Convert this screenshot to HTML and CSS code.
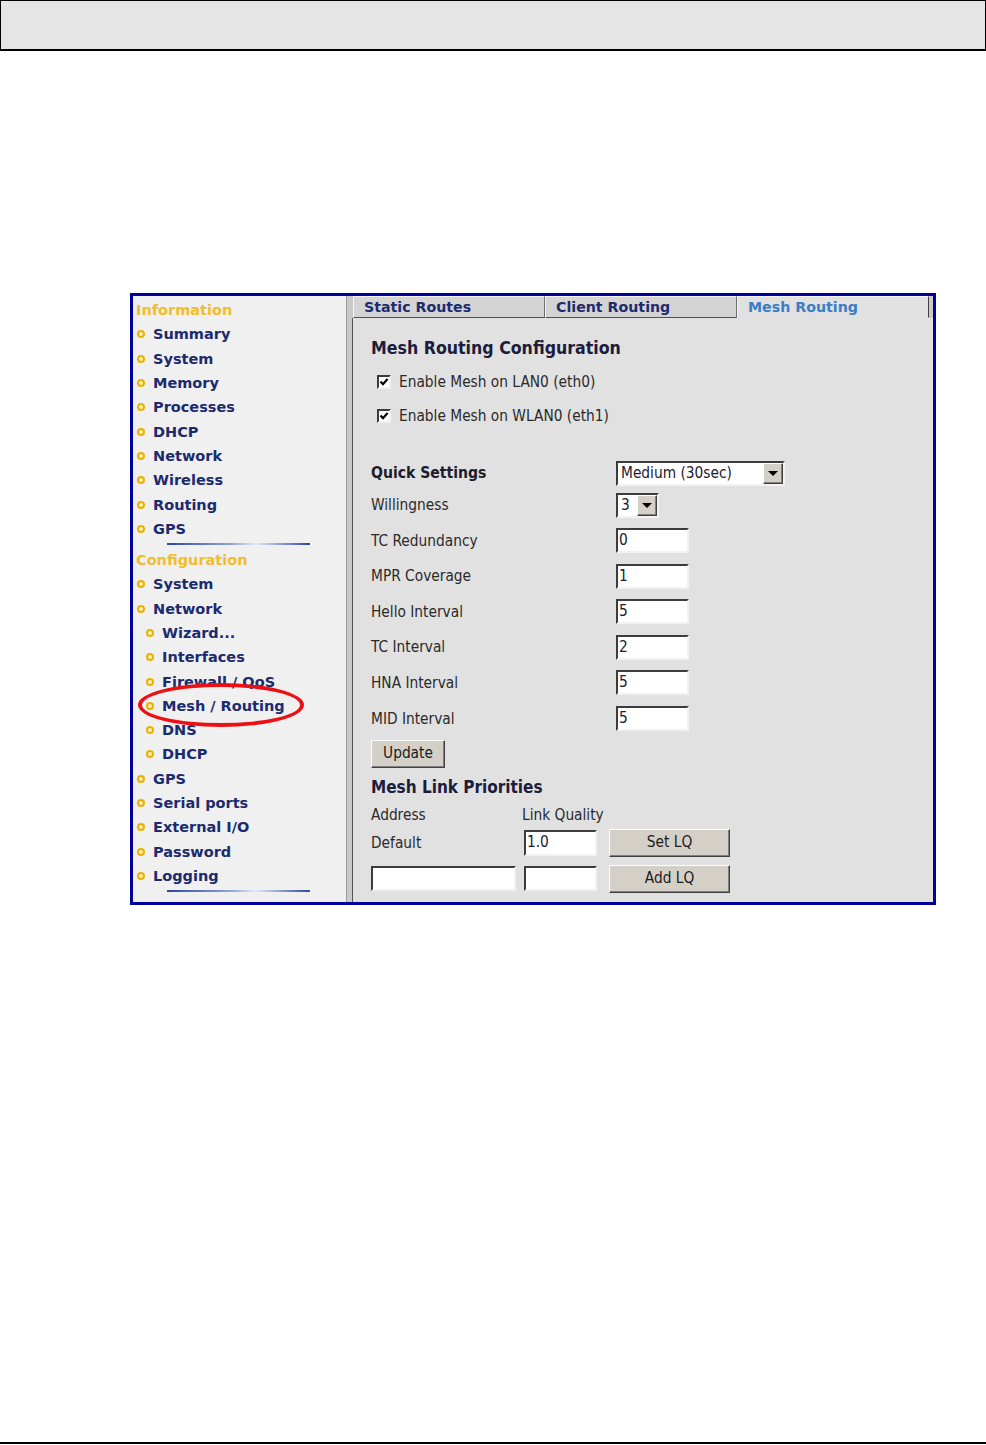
FILE: index.html
```html
<!DOCTYPE html>
<html lang="en">
<head>
  <meta charset="UTF-8">
  <meta name="viewport" content="width=device-width, initial-scale=1.0">
  <title>Mesh Routing</title>
  <link rel="stylesheet" href="styles.css">
</head>
<body>
  <div class="header-box"></div>

  <div class="shot">
    <div class="sidebar">
      <div class="head">Information</div>
      <div class="item">Summary</div>
      <div class="item">System</div>
      <div class="item">Memory</div>
      <div class="item">Processes</div>
      <div class="item">DHCP</div>
      <div class="item">Network</div>
      <div class="item">Wireless</div>
      <div class="item">Routing</div>
      <div class="item">GPS</div>
      <div class="sep"></div>
      <div class="head">Configuration</div>
      <div class="item">System</div>
      <div class="item">Network</div>
      <div class="item sub">Wizard...</div>
      <div class="item sub">Interfaces</div>
      <div class="item sub">Firewall / QoS</div>
      <div class="item sub">Mesh / Routing</div>
      <div class="item sub">DNS</div>
      <div class="item sub">DHCP</div>
      <div class="item">GPS</div>
      <div class="item">Serial ports</div>
      <div class="item">External I/O</div>
      <div class="item">Password</div>
      <div class="item">Logging</div>
      <div class="sep"></div>
      <div class="circle"></div>
    </div>

    <div class="main">
      <div class="tabs">
        <div class="tab">Static Routes</div>
        <div class="tab">Client Routing</div>
        <div class="tab active">Mesh Routing</div>
      </div>
      <div class="panel">
        <h2>Mesh Routing Configuration</h2>
        <div class="check-row first">
          <span class="box"><svg viewBox="0 0 10 10" width="10" height="10"><polyline points="1.5,4.5 4,7.2 8.6,2" fill="none" stroke="#000" stroke-width="2.2"/></svg></span>
          Enable Mesh on LAN0 (eth0)
        </div>
        <div class="check-row">
          <span class="box"><svg viewBox="0 0 10 10" width="10" height="10"><polyline points="1.5,4.5 4,7.2 8.6,2" fill="none" stroke="#000" stroke-width="2.2"/></svg></span>
          Enable Mesh on WLAN0 (eth1)
        </div>

        <div class="form">
          <div class="field">
            <span class="label bold">Quick Settings</span>
            <div class="select wide"><span class="val">Medium (30sec)</span><span class="arrow"></span></div>
          </div>
          <div class="field will">
            <span class="label">Willingness</span>
            <div class="select small"><span class="val">3</span><span class="arrow"></span></div>
          </div>
          <div class="field">
            <span class="label">TC Redundancy</span>
            <div class="input">0</div>
          </div>
          <div class="field">
            <span class="label">MPR Coverage</span>
            <div class="input">1</div>
          </div>
          <div class="field">
            <span class="label">Hello Interval</span>
            <div class="input">5</div>
          </div>
          <div class="field">
            <span class="label">TC Interval</span>
            <div class="input">2</div>
          </div>
          <div class="field">
            <span class="label">HNA Interval</span>
            <div class="input">5</div>
          </div>
          <div class="field">
            <span class="label">MID Interval</span>
            <div class="input">5</div>
          </div>
        </div>

        <div class="btn update">Update</div>

        <h3>Mesh Link Priorities</h3>
        <div class="lq-labels">
          <span class="addr">Address</span>
          <span>Link Quality</span>
        </div>
        <div class="lq-row">
          <span class="def">Default</span>
          <div class="input lq">1.0</div>
          <div class="btn lq-btn">Set LQ</div>
        </div>
        <div class="lq-row second">
          <div class="input addr-in"></div>
          <div class="input lq"></div>
          <div class="btn lq-btn">Add LQ</div>
        </div>
      </div>
    </div>
  </div>

  <div class="footer-line"></div>
</body>
</html>
```

FILE: styles.css
```css
body {
  margin: 0;
  background: #fff;
  font-family: "DejaVu Sans", Verdana, sans-serif;
}
.header-box {
  height: 48px;
  border: 1px solid #000;
  border-bottom-width: 2px;
  background: #e5e5e5;
}
.shot {
  margin: 242px 0 0 130px;
  width: 800px;
  height: 606px;
  border: 3px solid #00009c;
  display: flex;
}

/* left menu */
.sidebar {
  position: relative;
  width: 213px;
  padding-top: 2px;
  background: #f0f0f0;
  border-right: 1px solid #9c9c9c;
  overflow: hidden;
  font-size: 14.5px;
  font-weight: bold;
}
.head {
  height: 24.3px;
  line-height: 24.3px;
  padding-left: 3px;
  color: #f2bd2c;
}
.item {
  display: flex;
  align-items: center;
  height: 24.3px;
  padding-left: 4px;
  color: #1c2a6e;
  white-space: nowrap;
}
.item::before {
  content: "";
  width: 4px;
  height: 4px;
  border: 2.5px solid #eab200;
  background: #fdf0b8;
  border-radius: 50%;
  margin-right: 8px;
}
.item.sub {
  padding-left: 13px;
}
.sep {
  width: 143px;
  height: 2px;
  margin: 2px 0 3px 34px;
  background: linear-gradient(to right, #2c48a0, #8fa6d8 45%, #dfe8f6 62%, #2c48a0);
}
.circle {
  position: absolute;
  left: 5px;
  top: 387px;
  width: 166px;
  height: 44px;
  box-sizing: border-box;
  border: 4px solid #ec1014;
  border-radius: 50%;
}

/* right side */
.main {
  flex: 1;
  display: flex;
  flex-direction: column;
  border-left: 5px solid #c9c9c9;
  font-family: "DejaVu Sans Condensed", "DejaVu Sans", sans-serif;
  font-stretch: condensed;
  font-size: 15.3px;
  color: #2a2a2a;
}
.tabs {
  display: flex;
  height: 22px;
  padding-left: 1px;
  background: #c9c9c9;
}
.tab {
  box-sizing: border-box;
  width: 192px;
  height: 22px;
  padding-left: 10px;
  line-height: 20px;
  background: #d4d4d4;
  border: 1px solid;
  border-color: #f4f4f4 #6e6e6e #505050 #f4f4f4;
  font-family: "DejaVu Sans", Verdana, sans-serif;
  font-stretch: normal;
  font-size: 14.2px;
  font-weight: bold;
  color: #1e2b6e;
}
.tab.active {
  background: #e1e1e1;
  border-bottom-color: #e1e1e1;
  border-right-color: #404040;
  color: #3a7ec6;
}
.panel {
  flex: 1;
  background: #e1e1e1;
  border-left: 1px solid #555;
  padding-left: 18px;
}
h2 {
  margin: 0;
  padding-top: 19px;
  line-height: 22px;
  font-size: 17.6px;
  font-weight: bold;
  color: #1c1c3c;
}
.check-row {
  display: flex;
  align-items: center;
  height: 34px;
  padding-left: 6px;
}
.check-row.first {
  margin-top: 6px;
}
.box {
  box-sizing: border-box;
  width: 14px;
  height: 14px;
  margin-right: 8px;
  display: flex;
  align-items: center;
  justify-content: center;
  background: #fff;
  border: 2px solid;
  border-color: #3a3a3a #f0f0f0 #f0f0f0 #3a3a3a;
}

.form {
  margin-top: 27px;
}
.field {
  display: flex;
  align-items: center;
  height: 26px;
  margin-top: 9.6px;
}
.field:first-child {
  margin-top: 0;
}
.field.will {
  margin-top: 6px;
}
.label {
  width: 245px;
}
.bold {
  font-weight: bold;
  font-size: 15.6px;
  color: #1c1c2c;
}
.select, .input {
  box-sizing: border-box;
  height: 25px;
  background: #fff;
  border: 2px solid;
  border-color: #3c3c3c #f2f2f2 #f2f2f2 #3c3c3c;
  color: #201a30;
}
.select {
  display: flex;
  align-items: center;
  justify-content: space-between;
  padding-left: 3px;
}
.select.wide {
  width: 169px;
}
.select.small {
  width: 43px;
}
.arrow {
  box-sizing: border-box;
  width: 20px;
  height: 21px;
  display: flex;
  align-items: center;
  justify-content: center;
  background: #d4d0c8;
  border: 1px solid;
  border-color: #fff #404040 #404040 #fff;
  box-shadow: inset -1px -1px #808080;
}
.arrow::after {
  content: "";
  border-left: 5px solid transparent;
  border-right: 5px solid transparent;
  border-top: 5px solid #000;
}
.input {
  width: 73px;
  padding-left: 1px;
  line-height: 21px;
}
.btn {
  box-sizing: border-box;
  height: 28px;
  line-height: 25px;
  text-align: center;
  background: #d4d0c8;
  border: 1px solid;
  border-color: #fff #404040 #404040 #fff;
  box-shadow: inset -1px -1px #808080;
  color: #1a1a1a;
}
.update {
  width: 74px;
  margin-top: 8px;
}
h3 {
  margin: 8px 0 0;
  line-height: 22px;
  font-size: 17px;
  font-weight: bold;
  color: #1c1c3c;
}
.lq-labels {
  margin-top: 7px;
  height: 20px;
  line-height: 20px;
  display: flex;
}
.addr {
  width: 151px;
}
.lq-row {
  display: flex;
  align-items: center;
  height: 28px;
  margin-top: 4px;
}
.lq-row.second {
  margin-top: 8px;
}
.def {
  width: 153px;
}
.input.lq {
  width: 73px;
  height: 26px;
}
.lq-row.second .input {
  height: 25px;
}
.input.addr-in {
  width: 145px;
  margin-right: 8px;
}
.lq-btn {
  width: 121px;
  margin-left: 12px;
}

.footer-line {
  margin-top: 537px;
  height: 2px;
  background: #000;
}
```
